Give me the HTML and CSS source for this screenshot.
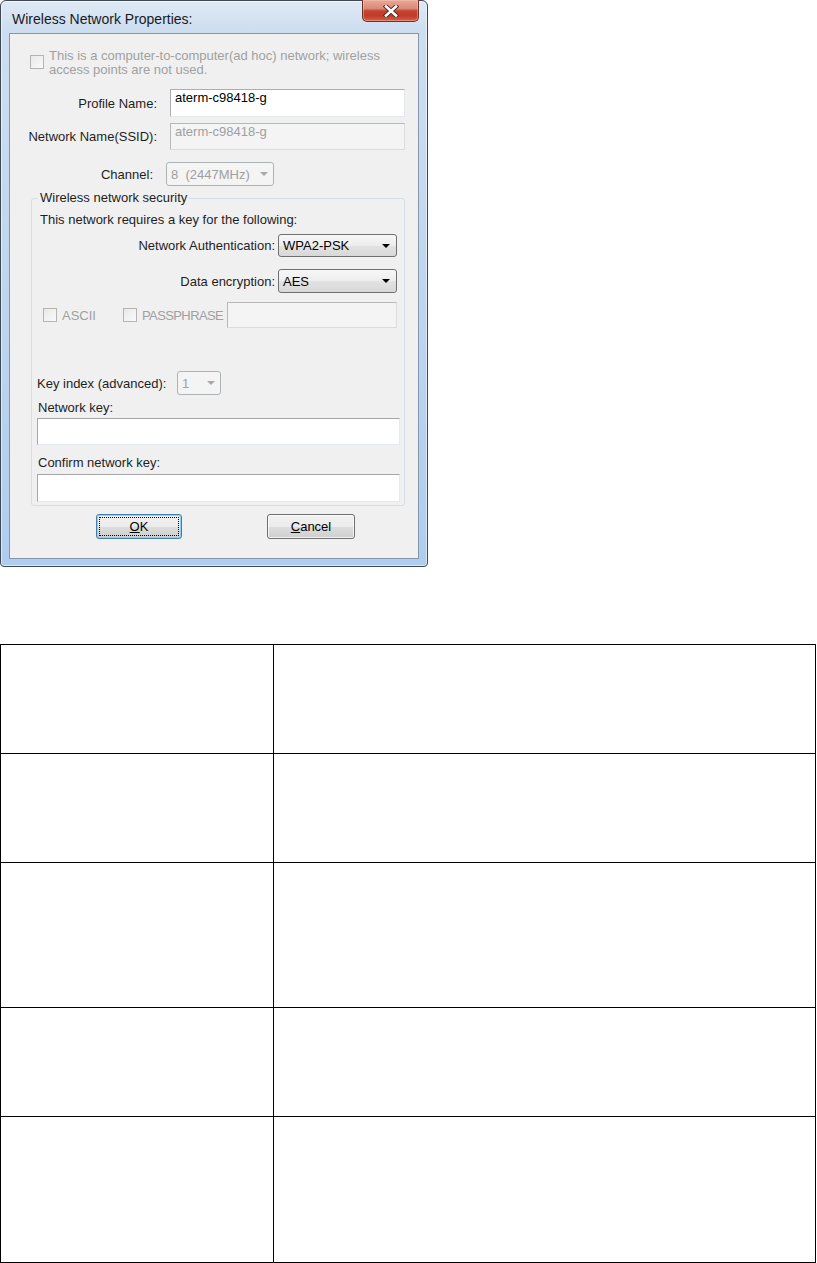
FILE: index.html
```html
<!DOCTYPE html>
<html lang="en">
<head>
    <meta charset="UTF-8">
    <meta name="viewport" content="width=device-width, initial-scale=1.0">
    <title>Wireless Network Properties</title>
    <link rel="stylesheet" href="styles.css">
</head>
<body>
    <div class="window">
        <div class="titlebar">
            <span class="title">Wireless Network Properties:</span>
            <span class="close">
                <svg width="16" height="12" viewBox="0 0 16 12">
                    <path d="M3 1.5 L13 10.5 M13 1.5 L3 10.5" stroke="#4a2a25" stroke-width="4.4" stroke-linecap="square" fill="none"/>
                    <path d="M3 1.5 L13 10.5 M13 1.5 L3 10.5" stroke="#ffffff" stroke-width="2.6" stroke-linecap="square" fill="none"/>
                </svg>
            </span>
        </div>

        <div class="client">
            <div class="adhoc">
                <span class="check"></span>
                <span class="muted">This is a computer-to-computer(ad hoc) network; wireless<br>access points are not used.</span>
            </div>

            <div class="field profile">
                <span class="label">Profile Name:</span>
                <div class="edit">aterm-c98418-g</div>
            </div>

            <div class="field ssid">
                <span class="label">Network Name(SSID):</span>
                <div class="edit disabled">aterm-c98418-g</div>
            </div>

            <div class="field channel">
                <span class="label">Channel:</span>
                <div class="combo disabled"><span>8&nbsp; (2447MHz)</span><i class="arrow"></i></div>
            </div>

            <fieldset class="security">
                <legend>Wireless network security</legend>
                <div class="intro">This network requires a key for the following:</div>

                <div class="pick auth">
                    <span class="label">Network Authentication:</span>
                    <div class="combo"><span>WPA2-PSK</span><i class="arrow"></i></div>
                </div>

                <div class="pick enc">
                    <span class="label">Data encryption:</span>
                    <div class="combo"><span>AES</span><i class="arrow"></i></div>
                </div>

                <div class="keytype">
                    <span class="check"></span>
                    <span class="muted ascii">ASCII</span>
                    <span class="check"></span>
                    <span class="muted phrase">PASSPHRASE</span>
                    <div class="edit disabled pass"></div>
                </div>

                <div class="keyindex">
                    <span class="label">Key index (advanced):</span>
                    <div class="combo disabled small"><span>1</span><i class="arrow"></i></div>
                </div>

                <div class="caption">Network key:</div>
                <div class="edit key"></div>

                <div class="caption confirm">Confirm network key:</div>
                <div class="edit key"></div>
            </fieldset>

            <div class="buttons">
                <div class="btn default"><span class="focus"><u>O</u>K</span></div>
                <div class="btn"><span><u>C</u>ancel</span></div>
            </div>
        </div>
    </div>

    <table class="grid">
        <tr class="row-a"><td class="name"></td><td></td></tr>
        <tr class="row-a"><td class="name"></td><td></td></tr>
        <tr class="row-b"><td class="name"></td><td></td></tr>
        <tr class="row-a"><td class="name"></td><td></td></tr>
        <tr class="row-c"><td class="name"></td><td></td></tr>
    </table>
</body>
</html>
```

FILE: styles.css
```css
body {
    margin: 0;
    background: #fff;
    font-family: "Liberation Sans", Arial, sans-serif;
    font-size: 13px;
    color: #1e1e1e;
}

/* window frame */
.window {
    box-sizing: border-box;
    width: 428px;
    height: 567px;
    border: 1px solid #3e4852;
    border-radius: 6px 6px 4px 4px;
    background: linear-gradient(to bottom, #dfe9f5 0, #cddef0 30px, #bcd4ee 60%, #aecdef 100%);
    box-shadow: inset 0 0 0 1px rgba(255, 255, 255, 0.55);
    padding: 0 8px 0 8px;
}

.titlebar {
    height: 32px;
    display: flex;
    justify-content: space-between;
    align-items: flex-start;
}

.title {
    margin-top: 10px;
    margin-left: 3px;
    font-size: 14px;
    color: #1a1a1a;
}

.close {
    width: 57px;
    height: 22px;
    margin-top: -1px;
    box-sizing: border-box;
    border: 1px solid #6b3128;
    border-top: none;
    border-radius: 0 0 5px 5px;
    background: linear-gradient(to bottom, #e8a897 0, #dc8a78 40%, #c4432f 52%, #c13c28 75%, #d06048 100%);
    box-shadow: inset 0 0 0 1px rgba(255, 200, 190, 0.45);
    display: flex;
    justify-content: center;
    align-items: center;
}

.client {
    box-sizing: border-box;
    height: 526px;
    border: 1px solid #8596aa;
    background: #f0f0f0;
    display: flex;
    flex-direction: column;
    align-items: flex-start;
}

.muted {
    color: #a0a0a0;
}

.check {
    box-sizing: border-box;
    width: 14px;
    height: 14px;
    border: 1px solid #b4b4b4;
    background: linear-gradient(135deg, #e9e9e9, #fafafa);
    flex: none;
}

.adhoc {
    display: flex;
    align-items: flex-start;
    gap: 5px;
    margin-top: 15px;
    padding-left: 20px;
    line-height: 14px;
}

.adhoc .check {
    margin-top: 6px;
}

.field {
    display: flex;
    align-items: center;
}

.field .label {
    text-align: right;
    margin-right: 13px;
}

.profile {
    margin-top: 12px;
}

.profile .label,
.ssid .label {
    width: 147px;
}

.ssid {
    margin-top: 6px;
}

.channel {
    margin-top: 12px;
}

.channel .label {
    width: 143px;
}

/* edit boxes */
.edit {
    box-sizing: border-box;
    width: 235px;
    height: 28px;
    padding: 0 4px;
    line-height: 15px;
    background: #fff;
    color: #000;
    border: 1px solid;
    border-color: #abadb3 #e3e9ef #e3e9ef #abadb3;
}

.ssid .edit {
    height: 27px;
}

.edit.disabled {
    background: #f4f4f4;
    color: #a0a0a0;
    border-color: #b8b8b8 #dcdcdc #dcdcdc #b8b8b8;
}

/* combo boxes */
.combo {
    box-sizing: border-box;
    width: 119px;
    height: 24px;
    padding: 0 6px 0 4px;
    display: flex;
    align-items: center;
    justify-content: space-between;
    border: 1px solid #707070;
    border-radius: 3px;
    background: linear-gradient(to bottom, #f7f7f7 0, #ededed 50%, #e2e2e2 51%, #d8d8d8 100%);
    color: #000;
}

.arrow {
    width: 0;
    height: 0;
    border-left: 4px solid transparent;
    border-right: 4px solid transparent;
    border-top: 4px solid #000;
}

.combo.disabled {
    width: 108px;
    border-color: #adb2b5;
    background: #f4f4f4;
    color: #a0a0a0;
    padding-right: 5px;
}

.combo.disabled .arrow {
    border-top-color: #a8a8a8;
}

.combo.small {
    width: 44px;
}

/* group box */
.security {
    box-sizing: border-box;
    width: 374px;
    min-width: 0;
    margin: 6px 0 0 21px;
    padding: 0 0 3px 0;
    border: 1px solid #d5dfe5;
    border-radius: 3px;
    display: flex;
    flex-direction: column;
    align-items: flex-start;
}

.security legend {
    margin-left: 6px;
    padding: 0 2px;
    line-height: 12px;
}

.intro {
    margin-top: 9px;
    padding-left: 8px;
    line-height: 14px;
}

.pick {
    align-self: stretch;
    display: flex;
    justify-content: flex-end;
    align-items: center;
    padding-right: 7px;
}

.pick .label {
    margin-right: 3px;
}

.auth {
    margin-top: 7px;
}

.auth .combo {
    height: 23px;
}

.enc {
    margin-top: 12px;
}

.keytype {
    align-self: stretch;
    display: flex;
    align-items: center;
    margin-top: 9px;
    padding: 0 7px 0 11px;
}

.keytype .check {
    margin-right: 5px;
}

.ascii {
    margin-right: 27px;
}

.phrase {
    letter-spacing: -0.6px;
}

.pass {
    flex: 1 1 0;
    width: auto;
    min-width: 0;
    height: 26px;
    margin-left: 4px;
}

.keyindex {
    display: flex;
    align-items: center;
    margin-top: 43px;
    padding-left: 5px;
}

.keyindex .label {
    width: 135px;
    margin-right: 5px;
}

.caption {
    margin-top: 6px;
    padding-left: 6px;
    line-height: 14px;
}

.caption.confirm {
    margin-top: 11px;
}

.key {
    width: 363px;
    height: 27px;
    margin: 3px 0 0 5px;
    border-color: #a6a6a6 #e3e9ef #e3e9ef #a6a6a6;
}

.caption.confirm + .key {
    height: 28px;
    margin-top: 4px;
}

/* buttons */
.buttons {
    display: flex;
    gap: 85px;
    margin-top: 8px;
    padding-left: 86px;
}

.btn {
    box-sizing: border-box;
    width: 88px;
    height: 25px;
    border: 1px solid #707070;
    border-radius: 3px;
    background: linear-gradient(to bottom, #f2f2f2 0, #ebebeb 50%, #dddddd 51%, #cfcfcf 100%);
    box-shadow: inset 0 0 0 1px rgba(255, 255, 255, 0.7);
    display: flex;
    justify-content: center;
    align-items: center;
    color: #000;
}

.btn.default {
    width: 86px;
    border-color: #3c7fb1;
    box-shadow: inset 0 0 0 1px #8ed0f3;
    padding: 2px;
}

.btn .focus {
    align-self: stretch;
    flex: 1;
    display: flex;
    justify-content: center;
    align-items: center;
    border: 1px dotted #000;
}

/* table below the dialog */
.grid {
    width: 816px;
    margin-top: 77px;
    border-collapse: collapse;
}

.grid td {
    border: 1px solid #000;
    padding: 0;
}

.grid td.name {
    width: 272px;
}

.row-a {
    height: 109px;
}

.row-b {
    height: 145px;
}

.row-c {
    height: 146px;
}
```
